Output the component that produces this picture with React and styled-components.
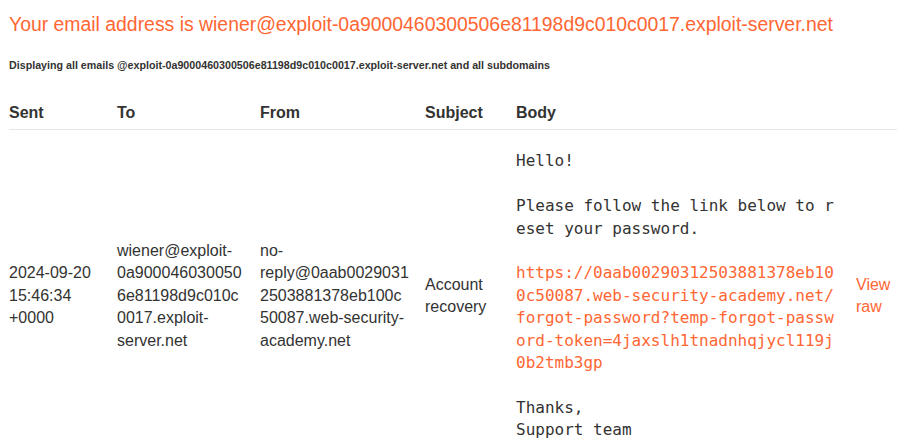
import styled, { createGlobalStyle } from "styled-components";

const GlobalStyle = createGlobalStyle`
  body {
    margin: 0;
    background: #ffffff;
    font-family: "Liberation Sans", Arial, sans-serif;
    color: #333332;
  }
`;

const Page = styled.div`
  padding: 0 5px 0 9px;
`;

const Title = styled.h1`
  margin: 13px 0 0;
  font-size: 19.4px;
  font-weight: 400;
  line-height: 23px;
  color: #ff6633;
`;

const Note = styled.h4`
  margin: 23px 0 0;
  font-size: 10.7px;
  font-weight: 700;
  line-height: 13px;
  color: #333332;
`;

const Table = styled.table`
  margin-top: 26px;
  width: 888px;
  border-collapse: collapse;
  table-layout: fixed;
`;

const Th = styled.th`
  text-align: left;
  font-size: 16px;
  font-weight: 700;
  line-height: 1.4;
  padding: 4px 16px 5px 0;
  border-bottom: 1px solid #e6e6e6;
`;

const Td = styled.td`
  font-size: 16px;
  line-height: 1.4;
  vertical-align: middle;
  padding: ${(p) => (p.$last ? "4px 0" : "4px 16px 4px 0")};
  overflow-wrap: break-word;
  word-break: ${(p) => (p.$last ? "normal" : "break-word")};
`;

const Pre = styled.pre`
  margin: 16px 0;
  font-family: "DejaVu Sans Mono", monospace;
  font-size: 16px;
  line-height: 1.4;
  white-space: pre-wrap;
  word-break: break-all;
  color: #333332;
`;

const Link = styled.a`
  color: #ff6633;
  text-decoration: none;
`;

const cols = [108, 143, 165, 91, 340, 41];

export default function App() {
  return (
    <Page>
      <GlobalStyle />
      <Title>
        Your email address is wiener@exploit-0a9000460300506e81198d9c010c0017.exploit-server.net
      </Title>
      <Note>
        Displaying all emails @exploit-0a9000460300506e81198d9c010c0017.exploit-server.net and all subdomains
      </Note>
      <Table>
        <colgroup>
          {cols.map((w, i) => (
            <col key={i} style={{ width: w }} />
          ))}
        </colgroup>
        <thead>
          <tr>
            <Th>Sent</Th>
            <Th>To</Th>
            <Th>From</Th>
            <Th>Subject</Th>
            <Th>Body</Th>
            <Th></Th>
          </tr>
        </thead>
        <tbody>
          <tr>
            <Td>2024-09-20 15:46:34 +0000</Td>
            <Td>wiener@exploit-0a9000460300506e81198d9c010c0017.exploit-server.net</Td>
            <Td>no-reply@0aab00290312503881378eb100c50087.web-security-academy.net</Td>
            <Td>Account recovery</Td>
            <Td>
              <Pre>
                {"Hello!\n\nPlease follow the link below to reset your password.\n\n"}
                <Link href="#">
                  https://0aab00290312503881378eb100c50087.web-security-academy.net/forgot-password?temp-forgot-password-token=4jaxslh1tnadnhqjycl119j0b2tmb3gp
                </Link>
                {"\n\nThanks,\nSupport team"}
              </Pre>
            </Td>
            <Td $last>
              <Link href="#">View raw</Link>
            </Td>
          </tr>
        </tbody>
      </Table>
    </Page>
  );
}
